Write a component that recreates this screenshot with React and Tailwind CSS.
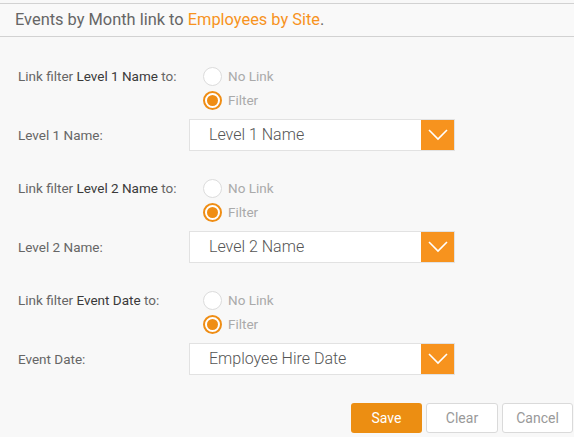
import React from "react";

const font = { fontFamily: "Roboto, 'Liberation Sans', sans-serif" };

function Radio({ checked, label }) {
  return (
    <div className="flex items-center h-6">
      {checked ? (
        <span className="w-[19px] h-[19px] rounded-full border-2 border-[#ef8d14] bg-white flex items-center justify-center">
          <span className="w-[11px] h-[11px] rounded-full bg-[#ef8d14]" />
        </span>
      ) : (
        <span className="w-[19px] h-[19px] rounded-full border border-[#dcdcdc] bg-white" />
      )}
      <span className="ml-[6px] text-[13.5px] text-[#aaa]">{label}</span>
    </div>
  );
}

function Section({ bold, label, value }) {
  return (
    <div className="flex flex-col">
      <div className="flex">
        <div className="w-[171px] h-6 flex items-center text-[13.5px] text-[#666] whitespace-nowrap">
          <span>Link filter&nbsp;</span>
          <span className="text-[#3a3a3a]">{bold}</span>
          <span>&nbsp;to:</span>
        </div>
        <div className="ml-[14px] flex flex-col">
          <Radio label="No Link" />
          <Radio checked label="Filter" />
        </div>
      </div>
      <div className="flex mt-[7px] mb-[1px] items-center">
        <div className="w-[171px] text-[13.5px] text-[#666]">{label}</div>
        <div className="w-[266px] h-8 flex border border-[#e2e2e2] bg-white">
          <div className="flex-1 flex items-center pl-[19px] text-[16px] text-[#555] font-light">{value}</div>
          <div className="w-[33px] h-full bg-[#f7931e] flex items-center justify-center">
            <svg width="20" height="12" viewBox="0 0 20 12" fill="none">
              <path d="M1 1 L10 10 L19 1" stroke="white" strokeWidth="1.6" />
            </svg>
          </div>
        </div>
      </div>
    </div>
  );
}

export default function App() {
  return (
    <div style={font} className="w-[574px] h-[437px] bg-[#f8f8f8] overflow-hidden">
      <div className="mt-[3px] border-t border-b border-[#d2d2d2] h-[34px] flex items-center pl-[15px] bg-[#f9f9f9]">
        <span className="text-[16.4px] text-[#666]">
          Events by Month link to <span className="text-[#f7931e]">Employees by Site</span>.
        </span>
      </div>
      <div className="px-[18px] pt-[27px] flex flex-col gap-6">
        <Section bold="Level 1 Name" label="Level 1 Name:" value="Level 1 Name" />
        <Section bold="Level 2 Name" label="Level 2 Name:" value="Level 2 Name" />
        <Section bold="Event Date" label="Event Date:" value="Employee Hire Date" />
      </div>
      <div className="flex justify-end gap-1 mt-[27px] pr-[1px]">
        <button className="w-[71px] h-[30px] rounded-[3px] bg-[#ec8e12] text-white text-[14px]">Save</button>
        <button className="w-[72px] h-[30px] rounded-[3px] border border-[#dadada] bg-white text-[#999] text-[14px]">Clear</button>
        <button className="w-[71px] h-[30px] rounded-[3px] border border-[#dadada] bg-white text-[#999] text-[14px]">Cancel</button>
      </div>
    </div>
  );
}
